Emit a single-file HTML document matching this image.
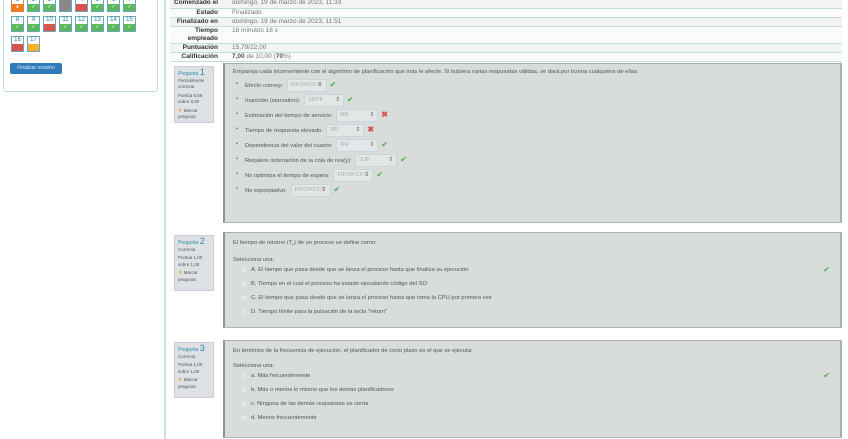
<!DOCTYPE html>
<html><head><meta charset="utf-8"><style>
*{box-sizing:border-box;margin:0;padding:0}
body{width:848px;height:439px;overflow:hidden;background:#fff;font-family:"Liberation Sans",sans-serif;position:relative;color:#333}
.abs{position:absolute}
.panel{left:3px;top:-5px;width:155px;height:97px;border:1px solid #bfdde3;border-radius:3px}
.vl{left:164px;top:0;width:2px;height:439px;background:#c8e3e8}
.nb{position:absolute;width:13px;height:16px;border:1px solid #6aa8b8;background:#fff;font-size:6px;color:#2a7aa0;text-align:center;line-height:7px}
.nb i{position:absolute;left:0;right:0;bottom:0;height:7px;background:#5cb85c;color:#fff;font-style:normal;font-size:5px;line-height:7px}
.btn{left:10px;top:63px;width:52px;height:11px;background:#2f7ab8;border-radius:2px;color:#dbe9f5;font-size:5px;line-height:11px;text-align:center}
table{position:absolute;left:170px;top:-1px;width:672px;border-collapse:collapse;font-size:6.5px}
td{border-bottom:1px solid #bfdde3;height:9px;padding:0 2px;vertical-align:top;line-height:8px}
td.l{width:50px;text-align:right;font-weight:bold;color:#333}
td.v{color:#777;padding-left:12px}
tr:nth-child(odd) td{background:#f3f3f3}
tr:nth-child(even) td{background:#fbfbfb}
.info{position:absolute;left:174px;width:40px;background:#dde1e4;border:1px solid #ccd;font-size:4.5px;line-height:6.5px;padding:2px 3px;color:#555}
.info b{color:#2a8ab0;font-weight:normal;font-size:5px}
.info b span{font-size:9px}
.q{position:absolute;left:223px;width:619px;background:#d8dcdb;border-left:2px solid #8d9595;border-top:1px solid #a8b0b0;border-right:2px solid #a9b1b1;border-bottom:1px solid #b0b6b6;font-size:5.8px;color:#555;padding:5px 8px}
.row{height:15px;position:relative;padding-left:12px;line-height:15px;white-space:nowrap;color:#555}
.row:before{content:"•";position:absolute;left:3px}
.sel{display:inline-block;height:13px;border:1px solid #c8d6dc;background:#e3e6e7;color:#aaa;padding:0 3px;vertical-align:middle;line-height:11px;margin-left:2px;white-space:nowrap;overflow:hidden;position:relative}
.sel em{position:absolute;right:3px;font-style:normal;color:#777}
.ok{color:#4cae4c;font-size:8px;margin-left:3px}
.no{color:#d9534f;font-size:8px;margin-left:3px;font-weight:bold}
.opt{height:14px;line-height:14px;padding-left:8px;color:#555}
.opt:before{content:"";display:inline-block;width:5px;height:5px;border-radius:50%;background:#e5e7e7;margin-right:5px;vertical-align:middle}
</style></head><body>
<div class="abs panel"></div>
<div class="abs vl"></div>
<div class="nb" style="left:11px;top:-4px;border-color:#e0803a">1<i style="background:#f07a20">●</i></div>
<div class="nb" style="left:27px;top:-4px">2<i>✓</i></div>
<div class="nb" style="left:43px;top:-4px">3<i>✓</i></div>
<div class="nb" style="left:59px;top:-4px">?<i style="background:#888;height:14px"></i></div>
<div class="nb" style="left:75px;top:-4px">4<i style="background:#d9534f"></i></div>
<div class="nb" style="left:91px;top:-4px">5<i>✓</i></div>
<div class="nb" style="left:107px;top:-4px">6<i>✓</i></div>
<div class="nb" style="left:123px;top:-4px">7<i>✓</i></div>
<div class="nb" style="left:11px;top:16px">8<i>✓</i></div>
<div class="nb" style="left:27px;top:16px">9<i>✓</i></div>
<div class="nb" style="left:43px;top:16px">10<i style="background:#d9534f"></i></div>
<div class="nb" style="left:59px;top:16px">11<i>✓</i></div>
<div class="nb" style="left:75px;top:16px">12<i>✓</i></div>
<div class="nb" style="left:91px;top:16px">13<i>✓</i></div>
<div class="nb" style="left:107px;top:16px">14<i>✓</i></div>
<div class="nb" style="left:123px;top:16px">15<i>✓</i></div>
<div class="nb" style="left:11px;top:36px">16<i style="background:#d9534f"></i></div>
<div class="nb" style="left:27px;top:36px">17<i style="background:#f5b030"></i></div>
<div class="abs btn">Finalizar revisión</div>
<table>
<tr><td class="l">Comenzado el</td><td class="v">domingo, 19 de marzo de 2023, 11:33</td></tr>
<tr><td class="l">Estado</td><td class="v">Finalizado</td></tr>
<tr><td class="l">Finalizado en</td><td class="v">domingo, 19 de marzo de 2023, 11:51</td></tr>
<tr><td class="l" style="height:17px">Tiempo empleado</td><td class="v">18 minutos 18 s</td></tr>
<tr><td class="l">Puntuación</td><td class="v">15,79/22,00</td></tr>
<tr><td class="l">Calificación</td><td class="v"><b style="color:#555">7,00</b> de 10,00 (<b style="color:#555">70</b>%)</td></tr>
</table>

<div class="info" style="top:66px;height:57px"><b>Pregunta <span>1</span></b><br>Parcialmente correcta<br><span style="display:block;margin-top:2px">Puntúa 5,58 sobre 8,00</span><span style="display:block;margin-top:2px"><span style="color:#e8a000">▼</span> Marcar pregunta</span></div>
<div class="q" style="top:63px;height:160px">
<div style="margin-bottom:2px;white-space:nowrap">Empareja cada inconveniente con el algoritmo de planificación que más le afecte. Si hubiera varias respuestas válidas, se dará por buena cualquiera de ellas.</div>
<div class="row">Efecto convoy: <span class="sel" style="width:40px">FIFO/FCFS<em>⇕</em></span><span class="ok">✔</span></div>
<div class="row">Inanición (starvation): <span class="sel" style="width:40px">SRTF<em>⇕</em></span><span class="ok">✔</span></div>
<div class="row">Estimación del tiempo de servicio: <span class="sel" style="width:42px">RR<em>⇕</em></span><span class="no">✖</span></div>
<div class="row">Tiempo de respuesta elevado: <span class="sel" style="width:38px">RR<em>⇕</em></span><span class="no">✖</span></div>
<div class="row">Dependencia del valor del cuanto: <span class="sel" style="width:42px">RR<em>⇕</em></span><span class="ok">✔</span></div>
<div class="row">Requiere ordenación de la cola de rea(y): <span class="sel" style="width:42px">SJF<em>⇕</em></span><span class="ok">✔</span></div>
<div class="row">No optimiza el tiempo de espera: <span class="sel" style="width:40px">FIFO/FCFS<em>⇕</em></span><span class="ok">✔</span></div>
<div class="row">No expropiativo: <span class="sel" style="width:40px">FIFO/FCFS<em>⇕</em></span><span class="ok">✔</span></div>
</div>

<div class="info" style="top:235px;height:56px"><b>Pregunta <span>2</span></b><br>Correcta<br><span style="display:block;margin-top:2px">Puntúa 1,00 sobre 1,00</span><span style="display:block;margin-top:2px"><span style="color:#e8a000">▼</span> Marcar pregunta</span></div>
<div class="q" style="top:232px;height:96px">
<div style="margin-top:2px">El tiempo de retorno (T<sub>r</sub>) de un proceso se define como:</div>
<div style="margin-top:9px">Selecciona una:</div>
<div class="opt">A. El tiempo que pasa desde que se lanza el proceso hasta que finaliza su ejecución<span class="ok" style="position:absolute;right:10px">✔</span></div>
<div class="opt">B. Tiempo en el cual el proceso ha estado ejecutando código del SO</div>
<div class="opt">C. El tiempo que pasa desde que se lanza el proceso hasta que toma la CPU por primera vez</div>
<div class="opt">D. Tiempo límite para la pulsación de la tecla "return"</div>
</div>

<div class="info" style="top:342px;height:56px"><b>Pregunta <span>3</span></b><br>Correcta<br><span style="display:block;margin-top:2px">Puntúa 1,00 sobre 1,00</span><span style="display:block;margin-top:2px"><span style="color:#e8a000">▼</span> Marcar pregunta</span></div>
<div class="q" style="top:340px;height:98px">
<div style="margin-top:2px">En términos de la frecuencia de ejecución, el planificador de corto plazo es el que se ejecuta:</div>
<div style="margin-top:9px">Selecciona una:</div>
<div class="opt">a. Más frecuentemente<span class="ok" style="position:absolute;right:10px">✔</span></div>
<div class="opt">b. Más o menos lo mismo que los demás planificadores</div>
<div class="opt">c. Ninguna de las demás respuestas es cierta</div>
<div class="opt">d. Menos frecuentemente</div>
</div>
</body></html>
